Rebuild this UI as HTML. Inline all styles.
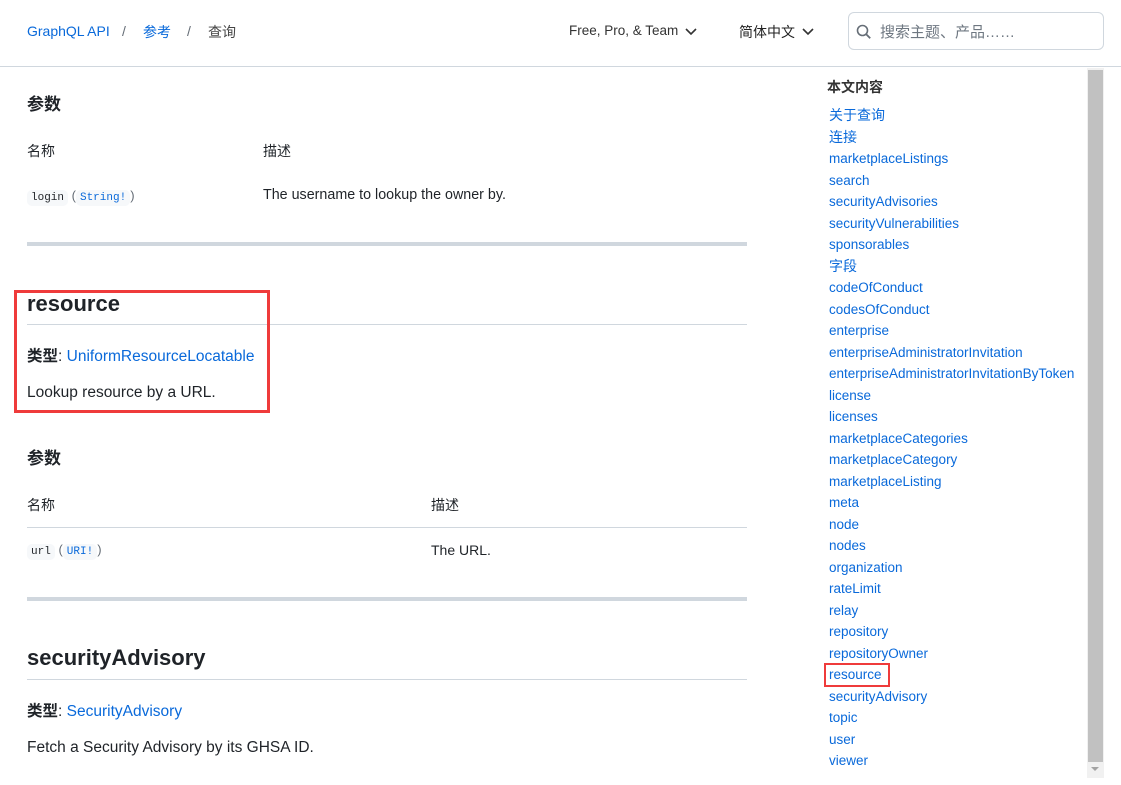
<!DOCTYPE html>
<html><head><meta charset="utf-8"><style>
*{margin:0;padding:0;box-sizing:border-box}
body{width:1121px;height:785px;overflow:hidden;background:#fff;font-family:"Liberation Sans","Noto Sans CJK SC",sans-serif;color:#1f2328;position:relative}
.a{position:absolute;white-space:nowrap}
.blue{color:#0969da}
.code{font-family:"Liberation Mono",monospace;font-size:11px;background:#f6f8fa;border-radius:5px;padding:2px 4px}
.hr{position:absolute;left:27px;width:720px;background:#d0d7de}
.side div{height:21.5px;line-height:21.5px;font-size:13.5px;color:#0969da}
</style></head><body>
<div class="a blue" style="left:27px;top:23px;font-size:14px">GraphQL API</div>
<div class="a" style="left:122px;top:23px;font-size:14px;color:#656d76">/</div>
<div class="a blue" style="left:143px;top:22px;font-size:14px">参考</div>
<div class="a" style="left:187px;top:23px;font-size:14px;color:#656d76">/</div>
<div class="a" style="left:208px;top:22px;font-size:14px;color:#444">查询</div>
<div class="a" style="left:569px;top:23px;font-size:13.5px;color:#333">Free, Pro, &amp; Team</div>
<svg class="a" style="left:685px;top:28px" width="12" height="8"><path d="M1 1l5 5 5-5" stroke="#333" stroke-width="1.6" fill="none"/></svg>
<div class="a" style="left:739px;top:22px;font-size:14px;color:#222">简体中文</div>
<svg class="a" style="left:802px;top:28px" width="12" height="8"><path d="M1 1l5 5 5-5" stroke="#333" stroke-width="1.6" fill="none"/></svg>
<div class="a" style="left:848px;top:12px;width:256px;height:38px;border:1px solid #d0d7de;border-radius:6px"></div>
<svg class="a" style="left:856px;top:24px" width="16" height="16"><circle cx="6.5" cy="6.5" r="5" stroke="#656d76" stroke-width="1.6" fill="none"/><path d="M10.2 10.2l4 4" stroke="#656d76" stroke-width="1.8"/></svg>
<div class="a" style="left:880px;top:21px;font-size:15px;color:#6e7781">搜索主题、产品……</div>
<div class="a" style="left:0;top:66px;width:1121px;height:1px;background:#d0d7de"></div>

<div class="a" style="left:27px;top:90px;font-size:17px;font-weight:bold">参数</div>
<div class="a" style="left:27px;top:141px;font-size:14px">名称</div>
<div class="a" style="left:263px;top:141px;font-size:14px">描述</div>
<div class="a" style="left:27px;top:188px;font-size:13px"><span class="code">login</span> <span style="color:#656d76">(</span><span class="code blue">String!</span><span style="color:#656d76">)</span></div>
<div class="a" style="left:263px;top:187px;font-size:14.3px">The username to lookup the owner by.</div>
<div class="hr" style="top:242px;height:4px"></div>

<div class="a" style="left:27px;top:291px;font-size:22px;font-weight:bold">resource</div>
<div class="hr" style="top:324px;height:1px"></div>
<div class="a" style="left:27px;top:344px;font-size:15.5px"><b>类型</b>: <span class="blue">UniformResourceLocatable</span></div>
<div class="a" style="left:27px;top:384px;font-size:15.5px">Lookup resource by a URL.</div>
<div class="a" style="left:14px;top:290px;width:256px;height:123px;border:3px solid #ef3b3b"></div>
<div class="a" style="left:27px;top:444px;font-size:17px;font-weight:bold">参数</div>
<div class="a" style="left:27px;top:495px;font-size:14px">名称</div>
<div class="a" style="left:431px;top:495px;font-size:14px">描述</div>
<div class="hr" style="top:527px;height:1px"></div>
<div class="a" style="left:27px;top:542px;font-size:13px"><span class="code">url</span> <span style="color:#656d76">(</span><span class="code blue">URI!</span><span style="color:#656d76">)</span></div>
<div class="a" style="left:431px;top:542px;font-size:14px">The URL.</div>
<div class="hr" style="top:597px;height:4px"></div>

<div class="a" style="left:27px;top:645px;font-size:22px;font-weight:bold">securityAdvisory</div>
<div class="hr" style="top:679px;height:1px"></div>
<div class="a" style="left:27px;top:699px;font-size:15.5px"><b>类型</b>: <span class="blue">SecurityAdvisory</span></div>
<div class="a" style="left:27px;top:739px;font-size:15.5px">Fetch a Security Advisory by its GHSA ID.</div>

<div class="a" style="left:827px;top:77px;font-size:14px;font-weight:bold;color:#333">本文内容</div>
<div class="a side" style="left:829px;top:105px">
<div style="font-size:14px">关于查询</div><div style="font-size:14px">连接</div><div>marketplaceListings</div><div>search</div><div>securityAdvisories</div><div>securityVulnerabilities</div><div>sponsorables</div><div style="font-size:14px">字段</div><div>codeOfConduct</div><div>codesOfConduct</div><div>enterprise</div><div>enterpriseAdministratorInvitation</div><div>enterpriseAdministratorInvitationByToken</div><div>license</div><div>licenses</div><div>marketplaceCategories</div><div>marketplaceCategory</div><div>marketplaceListing</div><div>meta</div><div>node</div><div>nodes</div><div>organization</div><div>rateLimit</div><div>relay</div><div>repository</div><div>repositoryOwner</div><div>resource</div><div>securityAdvisory</div><div>topic</div><div>user</div><div>viewer</div>
</div>
<div class="a" style="left:824px;top:663px;width:66px;height:24px;border:2px solid #ef3b3b"></div>
<div class="a" style="left:1087px;top:68px;width:17px;height:710px;background:#f1f1f1"></div>
<div class="a" style="left:1088px;top:70px;width:15px;height:692px;background:#c1c1c1"></div>
<div class="a" style="left:1091px;top:767px;width:0;height:0;border-left:4px solid transparent;border-right:4px solid transparent;border-top:4px solid #a3a3a3"></div>
</body></html>
